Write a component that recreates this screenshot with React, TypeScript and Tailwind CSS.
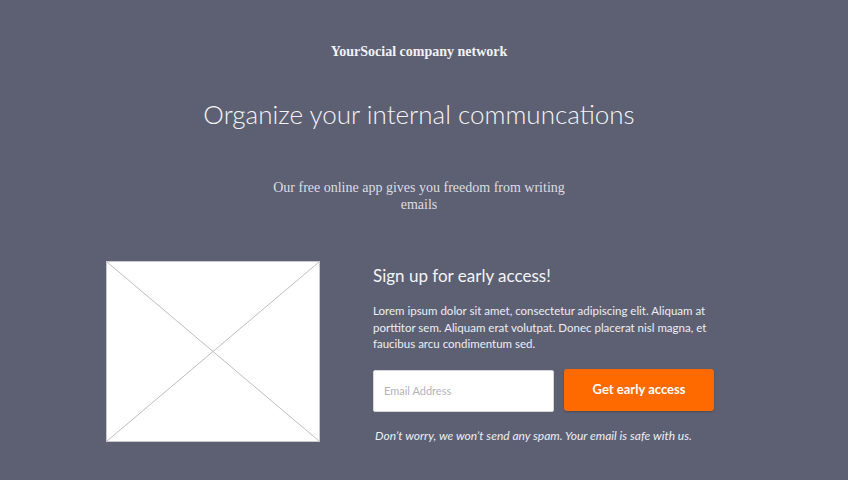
import React from "react";

const sans = { fontFamily: "Lato, 'Open Sans', sans-serif" };

function Placeholder() {
  return (
    <div className="relative h-[181px] w-[214px] shrink-0 border border-[#c9c9cc] bg-white">
      <svg className="absolute inset-0 h-full w-full" viewBox="0 0 214 181" preserveAspectRatio="none">
        <line x1="0" y1="0" x2="214" y2="181" stroke="#bdbdc2" strokeWidth="1" />
        <line x1="214" y1="0" x2="0" y2="181" stroke="#bdbdc2" strokeWidth="1" />
      </svg>
    </div>
  );
}

export default function App() {
  return (
    <div className="min-h-[480px] w-full bg-[#5d6072] pb-10 text-white">
      <div className="w-[626px]" style={{ marginLeft: 106 }}>
        <p className="pt-[43px] text-center font-['Liberation_Serif',serif] text-[14px] font-bold leading-[18px] text-[#f2f2f5]">
          YourSocial company network
        </p>
        <h1 className="mt-[37px] text-center font-['Lato',sans-serif] text-[26px] font-light leading-[32px] text-[#f4f4f6]">
          Organize your internal communcations
        </h1>
        <p className="mx-auto mt-[49px] w-[310px] text-center font-['Liberation_Serif',serif] text-[14px] leading-[17px] text-[#dcdde4]">
          Our free online app gives you freedom from writing emails
        </p>
        <div className="mt-[48px] flex">
          <Placeholder />
          <div className="ml-[53px] flex flex-col" style={sans}>
            <h2 className="mt-[3px] text-[17px] font-normal leading-[24px] text-[#f4f4f6]">Sign up for early access!</h2>
            <p className="mt-[15px] w-[345px] text-[11.5px] leading-[16.5px] text-[#eceef2]">
              Lorem ipsum dolor sit amet, consectetur adipiscing elit. Aliquam at porttitor sem. Aliquam erat volutpat. Donec placerat nisl magna, et faucibus arcu condimentum sed.
            </p>
            <div className="mt-[16px] flex items-start gap-[10px]">
              <input
                placeholder="Email Address"
                className="mt-[1px] h-[42px] w-[181px] rounded-[2px] border border-[#d6d6da] bg-white px-[10px] text-[11px] text-gray-700 outline-none placeholder:text-[#b3b3b8]"
              />
              <button className="h-[42px] w-[150px] rounded-[3px] bg-[#ff6a00] text-[13px] font-bold text-white shadow-[0_1px_2px_rgba(0,0,0,0.25)]">
                Get early access
              </button>
            </div>
            <p className="mt-[17px] pl-[2px] text-[12px] italic leading-[14px] text-[#eceef2]">
              Don’t worry, we won’t send any spam. Your email is safe with us.
            </p>
          </div>
        </div>
      </div>
    </div>
  );
}
